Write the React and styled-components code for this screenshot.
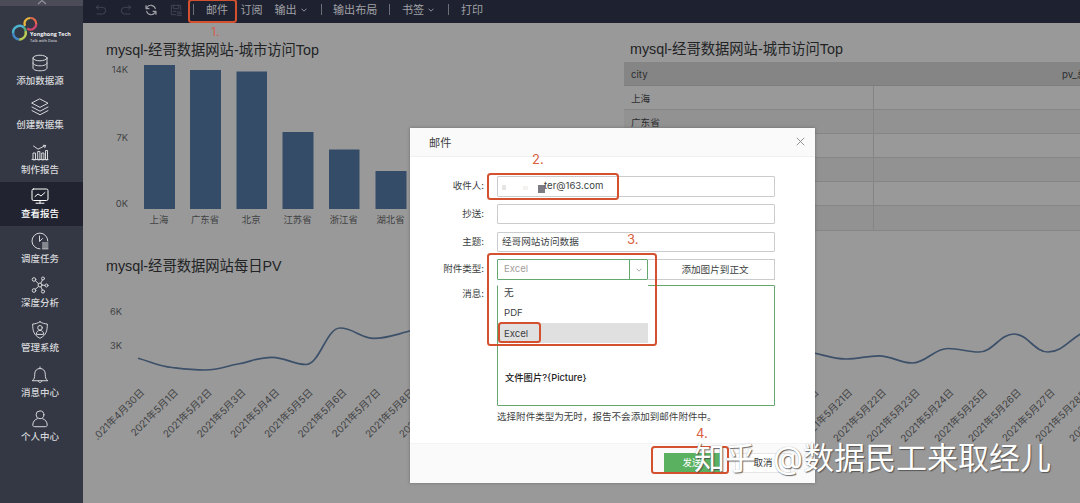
import React from 'react';
import styled, { createGlobalStyle, css } from 'styled-components';

const Global = createGlobalStyle`
  * { box-sizing: border-box; }
  body { margin: 0; overflow: hidden; font-family: Inter, "Noto Sans CJK SC", sans-serif; }
`;

const Page = styled.div`
  position: relative;
  display: flex;
  width: 1080px;
  height: 503px;
  overflow: hidden;
  background: #999;
`;

const Sidebar = styled.aside`
  display: flex;
  flex-direction: column;
  flex: none;
  width: 83px;
  height: 100%;
  background: #343844;
  color: #dcdde0;
`;

const Collapse = styled.div`
  display: flex;
  justify-content: center;
  align-items: flex-start;
  height: 6px;
  background: #4b4c57;
`;

const Brand = styled.div`
  display: flex;
  height: 42px;
  padding: 10px 0 0 11px;
`;

const BrandText = styled.div`
  display: flex;
  flex-direction: column;
  margin: 15px 0 0 -8px;
  white-space: nowrap;
  color: #f2f2f4;
  font-family: "Open Sans", sans-serif;
  font-size: 5.4px;
  font-weight: 700;
  line-height: 7px;
  small { font-size: 3.9px; line-height: 5px; font-weight: 600; color: #c5c6cc; }
`;

const NavItem = styled.div`
  display: flex;
  flex-direction: column;
  align-items: center;
  height: 44.6px;
  padding-top: 5.5px;
  padding-right: 3px;
  font-size: 9.5px;
  line-height: 16px;
  font-weight: 500;
  background: ${(p) => (p.$active ? '#212430' : 'transparent')};
  color: ${(p) => (p.$active ? '#fff' : '#d6d7da')};
  svg { flex: none; margin-bottom: 1px; }
`;

const Main = styled.main`
  display: flex;
  flex-direction: column;
  flex: 1;
  min-width: 0;
`;

const Toolbar = styled.header`
  display: flex;
  align-items: center;
  height: 23px;
  padding: 0 0 4px 12px;
  background: #1e2230;
  color: #a0a1a6;
  font-size: 11.1px;
  line-height: 16px;
`;

const Tool = styled.span`
  display: flex;
  align-items: center;
  gap: 4px;
  flex: none;
  width: ${(p) => p.$w}px;
  color: ${(p) => (p.$dim ? '#444753' : '#a0a1a6')};
  white-space: nowrap;
`;

const Divider = styled.i`
  flex: none;
  width: 1px;
  height: 11px;
  margin-right: ${(p) => p.$gap}px;
  background: #6c6e78;
`;

const Board = styled.div`
  display: grid;
  grid-template-columns: 541px 456px;
  grid-template-rows: 219px 261px;
  background: #999;
`;

const Panel = styled.section`
  display: flex;
  flex-direction: column;
  min-width: 0;
  grid-column: ${(p) => (p.$wide ? '1 / 3' : 'auto')};
  svg { display: block; }
`;

const Title = styled.h2`
  margin: 0;
  height: ${(p) => p.$h}px;
  padding: ${(p) => p.$pad};
  color: #222325;
  font-family: "Liberation Sans", "Noto Sans CJK SC", sans-serif;
  font-size: 14.3px;
  line-height: 20px;
  font-weight: 400;
  white-space: nowrap;
`;

const AxisText = styled.text`
  font-size: ${(p) => p.$size || 9.4}px;
  fill: #414244;
`;

const Row = styled.div`
  display: grid;
  grid-template-columns: 250px 206px;
  height: ${(p) => (p.$head ? 23.5 : 24.2)}px;
  border-bottom: 1px solid ${(p) => (p.$head ? '#7d7d7d' : '#858585')};
  background: ${(p) => (p.$head ? '#858585' : p.$alt ? '#929292' : '#999')};
  color: #2c2d2f;
  font-size: 9.6px;
  line-height: 25px;
  white-space: nowrap;
  overflow: hidden;
`;

const Cell = styled.span`
  padding-left: ${(p) => p.$pad ?? 7}px;
  border-right: ${(p) => (p.$line ? '1px solid #858585' : '0')};
`;

const Dialog = styled.div`
  position: absolute;
  left: 410px;
  top: 128px;
  display: flex;
  flex-direction: column;
  width: 405px;
  height: 354.5px;
  background: #fff;
  box-shadow: 0 0 3px rgba(60, 60, 60, 0.45);
  color: #3d3f42;
  font-size: 9.6px;
`;

const DialogHead = styled.div`
  display: flex;
  justify-content: space-between;
  align-items: center;
  height: 29px;
  padding: 0 10px 1px 19px;
  border-bottom: 1px solid #f0f0f0;
  background: #fafafa;
  font-size: 11.2px;
`;

const Form = styled.div`
  display: grid;
  grid-template-columns: 77px 278px;
  column-gap: 10px;
  row-gap: 7px;
  height: 286px;
  padding-top: 19px;
  grid-template-rows: repeat(4, 20.8px) 121px 18px;
`;

const Label = styled.label`
  padding-right: 3px;
  text-align: right;
  line-height: 20px;
  font-size: 9.5px;
  margin-top: ${(p) => p.$shift || 0}px;
`;

const fieldBorder = css`
  border: 1px solid ${(p) => (p.$green ? '#64a76f' : '#cbccce')};
  border-radius: 1px;
`;

const Field = styled.div`
  ${fieldBorder}
  display: flex;
  align-items: center;
  height: 20.5px;
  padding-left: ${(p) => p.$pad ?? 4}px;
  background: #fff;
  line-height: 18px;
  white-space: nowrap;
`;

const Mosaic = styled.i`
  flex: none;
  width: ${(p) => p.$w}px;
  height: ${(p) => p.$h}px;
  margin: ${(p) => p.$m};
  background: ${(p) => p.$c};
`;

const Split = styled.div`
  display: grid;
  grid-template-columns: 151px 127px;
`;

const Select = styled.div`
  ${fieldBorder}
  display: grid;
  grid-template-columns: 1fr 18px;
  height: 20.5px;
  padding-left: 6px;
  border-color: #64a76f;
  color: #a3a09c;
  line-height: 18px;
  span + span { display: flex; align-items: center; justify-content: center; border-left: 1px solid #64a76f; }
`;

const PictureButton = styled.button`
  height: 20.5px;
  padding: 0 0 0 8px;
  border: 1px solid #cbccce;
  border-left: 0;
  background: #fff;
  color: #3d3f42;
  font: 9.6px/16px Inter, "Noto Sans CJK SC", sans-serif;
`;

const Message = styled.div`
  ${fieldBorder}
  margin-top: -2px;
  height: 121px;
  padding: 84px 0 0 7px;
  color: #222;
  font-weight: 500;
  font-size: 9.3px;
  line-height: 16px;
`;

const Hint = styled.div`
  grid-column: 2;
  margin-top: -6px;
  line-height: 16px;
  font-size: 9.55px;
  white-space: nowrap;
`;

const Menu = styled.div`
  position: absolute;
  left: 88px;
  top: 152.5px;
  width: 150px;
  background: #fff;
  padding-top: 1px;
`;

const Option = styled.div`
  height: 20.6px;
  padding-left: 6px;
  line-height: 21px;
  background: ${(p) => (p.$on ? '#e0e0e1' : '#fff')};
`;

const DialogFoot = styled.div`
  display: flex;
  justify-content: flex-end;
  gap: 15px;
  flex: 1;
  padding: 9px 24px 0 0;
  border-top: 1px solid #f3f3f3;
  background: #fafafa;
`;

const Button = styled.button`
  width: 56px;
  height: 20px;
  padding: 0;
  border: ${(p) => (p.$primary ? '0' : '1px solid #e6e6e6')};
  background: ${(p) => (p.$primary ? '#5ab160' : '#fff')};
  color: ${(p) => (p.$primary ? '#fff' : '#333')};
  font: 9.5px/18px Inter, "Noto Sans CJK SC", sans-serif;
`;

const Mark = styled.div`
  position: absolute;
  left: ${(p) => p.$x}px;
  top: ${(p) => p.$y}px;
  width: ${(p) => p.$w}px;
  height: ${(p) => p.$h}px;
  border: 2px solid #d4512f;
  border-radius: 3.5px;
`;

const Step = styled.span`
  position: absolute;
  left: ${(p) => p.$x}px;
  top: ${(p) => p.$y}px;
  color: ${(p) => p.$c || '#d9603f'};
  font-size: ${(p) => p.$s || 13}px;
  line-height: 16px;
`;

const Watermark = styled.div`
  position: absolute;
  left: 694px;
  top: 436px;
  display: flex;
  gap: 17px;
  color: #fff;
  font-size: 31px;
  line-height: 44px;
  white-space: nowrap;
  text-shadow: 1px 1px 1px rgba(70, 70, 70, 0.8), 0 0 1px rgba(100, 100, 100, 0.5);
`;

const Icon = ({ children, w = 18, sw = 1, box = '0 0 18 18' }) => (
  <svg width={w} height={w} viewBox={box} fill="none" stroke="currentColor" strokeWidth={sw} strokeLinecap="round" strokeLinejoin="round">
    {children}
  </svg>
);

const Chevron = ({ w = 6 }) => (
  <svg width={w} height="4" viewBox="0 0 6 4" fill="none" stroke="currentColor" strokeWidth="0.9">
    <path d="M.5.7 3 3.2 5.5.7" />
  </svg>
);

const nav = [
  ['添加数据源', <><ellipse cx="9" cy="4" rx="7" ry="2.8" /><path d="M2 4v10c0 1.6 3 2.8 7 2.8s7-1.2 7-2.8V4M2 9c0 1.6 3 2.8 7 2.8S16 10.600 16 9" /></>],
  ['创建数据集', <><path d="M9 1 17 5.200 9 9.400 1 5.200ZM1 9l8 4.200L17 9M1 12.600l8 4.200 8-4.200" /></>],
  ['制作报告', <><path d="M2 16.500V10h2.500v6.500ZM6.700 16.500V8.500h2.200v8ZM10.700 16.500V10h2.200v6.500ZM14.500 16.500v-9h2v9ZM1 16.500h16M2.500 3l4.500 3.200L14.500 2.500M12.300 2.300l2.400.1-.9 2.200" /></>],
  ['查看报告', <><rect x="1" y="2" width="16" height="11.500" rx="1.500" /><path d="M4 9.500 7 7l3 2 4-3.500M9 13.500V16M5 16.200h8" /></>],
  ['调度任务', <><path d="M16.800 9A7.900 7.900 0 1 0 9 16.900M8.500 4v5.500l3-3" /><path d="M11.500 11h5.500M11.500 13h5.500M11.500 15h5.500M11.500 16.800h5.500" /></>],
  ['深度分析', <><circle cx="9" cy="9" r="2" /><circle cx="3" cy="3.500" r="1.800" /><circle cx="12" cy="2.500" r="1.500" /><circle cx="15.500" cy="9.500" r="1.500" /><circle cx="3" cy="14.500" r="1.800" /><circle cx="12" cy="15.500" r="1.600" /><path d="m4.400 4.700 3.100 3M9.800 7.200l1.700-3.300M11 9.100l3 .3M7.500 10.500l-3.200 2.800M9.900 10.800l1.400 3.200" /></>],
  ['管理系统', <><path d="M9 .8c2.300 1.500 4.600 2 7.300 2.200 0 6.500-.8 11-7.300 14.300C2.500 14 1.700 9.500 1.700 3 4.400 2.800 6.700 2.300 9 .8Z" /><circle cx="9" cy="6.800" r="2.300" /><path d="M5.300 13c0-5 7.400-5 7.400 0Z" /></>],
  ['消息中心', <><path d="M1.500 14.500c2-1.500 2.200-3 2.200-6.200C3.700 4.500 6 2.500 9 2.500s5.300 2 5.300 5.800c0 3.200.2 4.700 2.200 6.200ZM9 1v1.500M7.200 15c.3 2 3.300 2 3.600 0" /></>],
  ['个人中心', <><circle cx="9" cy="4.800" r="3.900" /><path d="M6.200 8.800C3.500 9.500 1.800 12 1.800 15c0 1 .5 1.700 1.500 1.700h11.400c1 0 1.500-.7 1.500-1.700 0-3-1.700-5.500-4.400-6.200" /></>],
];

const bars = [
  ['上海', 144, 65, 31],
  ['广东省', 190, 70, 31],
  ['北京', 236.5, 71.500, 30.500],
  ['江苏省', 282.500, 132, 31],
  ['浙江省', 329, 149.500, 30.500],
  ['湖北省', 375.500, 171, 31],
];

const points = [
  [138, 358.300], [172, 367.500], [205, 370], [238, 364], [272, 357.300], [306, 364.500], [340, 328], [374, 338.300], [408, 331.500],
  [441, 320], [475, 352], [509, 349], [543, 345], [576, 357], [610, 350], [643, 342], [677, 350], [711, 359], [745, 352], [778, 345],
  [812, 352.500], [846, 359], [879, 355.800], [912, 363], [948, 348.500], [979, 352], [1014, 334], [1048, 352], [1082, 333],
];

const smoothPath = points.reduce((d, [x, y], i) => {
  if (!i) return `M${x} ${y}`;
  const slope = (k) => {
    if (k <= 0 || k >= points.length - 1) return null;
    const [a, b, c] = [points[k - 1], points[k], points[k + 1]];
    const s1 = (b[1] - a[1]) / (b[0] - a[0]);
    const s2 = (c[1] - b[1]) / (c[0] - b[0]);
    return s1 * s2 <= 0 ? 0 : (2 * s1 * s2) / (s1 + s2);
  };
  const [px, py] = points[i - 1];
  const h = (x - px) * 0.4;
  const m = (y - py) / (x - px);
  return `${d}C${px + h} ${py + h * (slope(i - 1) ?? m)} ${x - h} ${y - h * (slope(i) ?? m)} ${x} ${y}`;
}, '');

const dates = Array.from({ length: 30 }, (_, i) => (i === 0 ? '.021年4月30日' : `2021年5月${i}日`));

export default function App() {
  return (
    <Page>
      <Global />
      <Sidebar>
        <Collapse>
          <svg width="10" height="5" viewBox="0 0 10 5" fill="none" stroke="#90919a" strokeWidth="1.200"><path d="M1 4 5 .5 9 4" /></svg>
        </Collapse>
        <Brand>
          <svg width="27" height="28" viewBox="0 0 27 28" fill="none" style={{ flex: 'none' }}>
            <path d="M14 10A5.700 5.700 0 0 1 19.500 2" stroke="#e8b73f" strokeWidth="2.200" />
            <path d="M19.500 2a5.700 5.700 0 0 1 5.700 6" stroke="#e8684a" strokeWidth="2.200" />
            <path d="M25.200 8a5.700 5.700 0 0 1-9 4.500" stroke="#d2466d" strokeWidth="2.200" />
            <path d="M13 11.500A6.500 6.500 0 0 0 2.200 17" stroke="#4fb2cf" strokeWidth="2.500" />
            <path d="M2.200 17a6.500 6.500 0 0 0 6 6.500" stroke="#4287c4" strokeWidth="2.500" />
            <path d="M8.200 23.500A6.500 6.500 0 0 0 14.500 15" stroke="#b6cc54" strokeWidth="2.500" />
            <path d="M14.500 15a6 6 0 0 0-1.500-3.500" stroke="#50ad78" strokeWidth="2.500" />
          </svg>
          <BrandText>Yonghong Tech<small>Talk with Data</small></BrandText>
        </Brand>
        {nav.map(([label, icon], i) => (
          <NavItem key={label} $active={i === 3}>
            <Icon>{icon}</Icon>
            {label}
          </NavItem>
        ))}
      </Sidebar>

      <Main>
        <Toolbar>
          <Tool $w={25} $dim><Icon w={12} sw={1.400}><path d="M5 2 2 5l3 3M2 5h9a5 5 0 0 1 0 10H3" /></Icon></Tool>
          <Tool $w={25} $dim><Icon w={12} sw={1.400}><path d="m13 2 3 3-3 3M16 5H7a5 5 0 0 0 0 10h8" /></Icon></Tool>
          <Tool $w={25}><Icon w={12} sw={1.700}><path d="M15.500 7A7 7 0 0 0 3 5L1.500 7M1.500 2.500V7H6M2.500 11A7 7 0 0 0 15 13l1.500-2M16.500 15.500V11H12" /></Icon></Tool>
          <Tool $w={23} $dim><Icon w={12} sw={1.400}><path d="M9 16H2V2h14v7M5 2v5h8V2M5 11h4M11 12h6M11 14.500h6M11 17h6" /></Icon></Tool>
          <Divider $gap={12} />
          <Tool $w={34.5}>邮件</Tool>
          <Tool $w={34}>订阅</Tool>
          <Tool $w={46}>输出<Chevron /></Tool>
          <Divider $gap={11.5} />
          <Tool $w={56}>输出布局</Tool>
          <Divider $gap={12} />
          <Tool $w={46}>书签<Chevron /></Tool>
          <Divider $gap={12} />
          <Tool $w={30}>打印</Tool>
        </Toolbar>

        <Board>
          <Panel>
            <Title $h={37} $pad="17px 0 0 23px">mysql-经哥数据网站-城市访问Top</Title>
            <svg width="541" height="182" viewBox="83 60 541 182">
              <AxisText x="128" y="73" textAnchor="end">14K</AxisText>
              <AxisText x="128" y="141" textAnchor="end">7K</AxisText>
              <AxisText x="128" y="207" textAnchor="end">0K</AxisText>
              {bars.map(([name, x, y, w]) => (
                <g key={name}>
                  <rect x={x} y={y} width={w} height={209 - y} fill="#344c68" />
                  <AxisText x={x + w / 2 - 0.5} y="222.500" textAnchor="middle">{name}</AxisText>
                </g>
              ))}
            </svg>
          </Panel>
          <Panel>
            <Title $h={39} $pad="16px 0 0 6px">mysql-经哥数据网站-城市访问Top</Title>
            <Row $head><Cell>city</Cell><Cell $pad={188}>pv_总和</Cell></Row>
            {['上海', '广东省', '', '', '', ''].map((city, i) => (
              <Row key={i} $alt={i % 2 === 1}><Cell $line>{city}</Cell><Cell /></Row>
            ))}
          </Panel>
          <Panel $wide>
            <Title $h={36} $pad="14px 0 0 23px">mysql-经哥数据网站每日PV</Title>
            <svg width="997" height="225" viewBox="83 278 997 225">
              <AxisText x="122" y="315" textAnchor="end">6K</AxisText>
              <AxisText x="122" y="349" textAnchor="end">3K</AxisText>
              <path d={smoothPath} fill="none" stroke="#3c5069" strokeWidth="1.700" />
              {dates.map((date, i) => {
                const x = 145 + i * 33.720;
                return (
                  <AxisText key={date} $size={9.900} x={x} y="393" textAnchor="end" transform={`rotate(-45 ${x} 393)`}>{date}</AxisText>
                );
              })}
            </svg>
          </Panel>
        </Board>
      </Main>

      <Dialog>
        <DialogHead>
          邮件
          <svg width="9" height="9" viewBox="0 0 9 9" stroke="#86888c" strokeWidth="0.900"><path d="m.8.8 7.400 7.400M8.200.8.8 8.200" /></svg>
        </DialogHead>
        <Form>
          <Label>收件人:</Label>
          <Field>
            <Mosaic $w={4} $h={5} $m="3px 17px 0 0" $c="#e7e4e4" />
            <Mosaic $w={5} $h={4} $m="3px 10px 0 0" $c="#f4f1f1" />
            <Mosaic $w={7} $h={8} $m="6px -1px 0 0" $c="#7c7b83" />
            ter@163.com
          </Field>
          <Label>抄送:</Label>
          <Field />
          <Label>主题:</Label>
          <Field>经哥网站访问数据</Field>
          <Label>附件类型:</Label>
          <Split>
            <Select><span>Excel</span><span><Chevron /></span></Select>
            <PictureButton>添加图片到正文</PictureButton>
          </Split>
          <Label $shift={-3}>消息:</Label>
          <Message $green>文件图片?{'{Picture}'}</Message>
          <Hint>选择附件类型为无时，报告不会添加到邮件附件中。</Hint>
        </Form>
        <DialogFoot>
          <Button $primary>发送</Button>
          <Button>取消</Button>
        </DialogFoot>
        <Menu>
          <Option>无</Option>
          <Option>PDF</Option>
          <Option $on>Excel</Option>
        </Menu>
      </Dialog>

      <Mark $x={188} $y={-1} $w={49} $h={24} />
      <Mark $x={486.5} $y={173} $w={132} $h={27} />
      <Mark $x={487} $y={253} $w={169.500} $h={93} />
      <Mark $x={498} $y={322} $w={43} $h={21} />
      <Mark $x={651} $y={446} $w={78} $h={28} />
      <Step $x={211} $y={24} $s={12} $c="#cf5f4e">1.</Step>
      <Step $x={532} $y={151}>2.</Step>
      <Step $x={627} $y={231}>3.</Step>
      <Step $x={696} $y={425}>4.</Step>
      <Watermark><span>知乎</span><span>@数据民工来取经儿</span></Watermark>
    </Page>
  );
}
